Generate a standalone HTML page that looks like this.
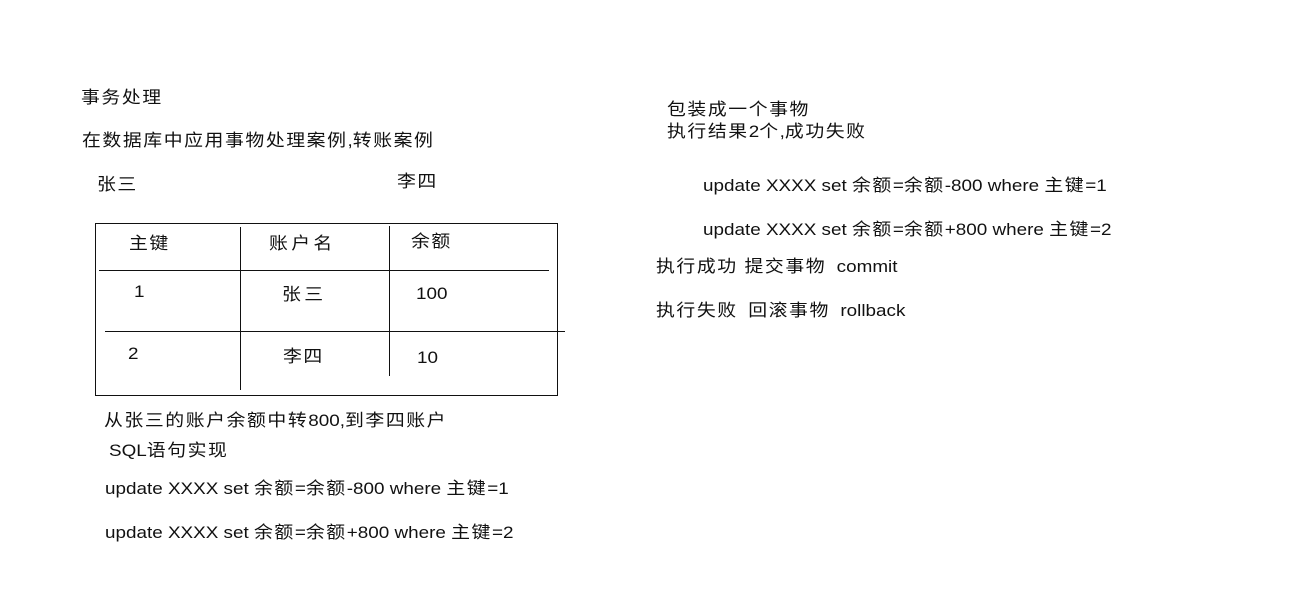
<!DOCTYPE html>
<html><head><meta charset="utf-8"><style>
body{margin:0;width:1290px;height:599px;background:#fff;position:relative;overflow:hidden;font-family:"Liberation Sans","Noto Sans CJK SC",sans-serif;font-size:17px;color:#111}
.t{position:absolute;white-space:nowrap;line-height:20px;transform:scaleX(1.11);transform-origin:0 0}
.c{font-weight:normal;letter-spacing:1.4px}
.l{position:absolute;background:#111}
</style></head><body>
<div class="t" style="left:81px;top:88px"><b class="c">事务处理</b></div>
<div class="t" style="left:82px;top:131px"><b class="c">在数据库中应用事物处理案例</b>,<b class="c">转账案例</b></div>
<div class="t" style="left:97px;top:175px"><b class="c">张三</b></div>
<div class="t" style="left:397px;top:172px"><b class="c">李四</b></div>
<div class="l" style="left:95px;top:223px;width:463px;height:1px"></div>
<div class="l" style="left:95px;top:395px;width:463px;height:1px"></div>
<div class="l" style="left:95px;top:223px;width:1px;height:173px"></div>
<div class="l" style="left:557px;top:223px;width:1px;height:173px"></div>
<div class="l" style="left:99px;top:270px;width:450px;height:1px"></div>
<div class="l" style="left:105px;top:331px;width:460px;height:1px"></div>
<div class="l" style="left:240px;top:227px;width:1px;height:163px"></div>
<div class="l" style="left:389px;top:226px;width:1px;height:150px"></div>
<div class="t" style="left:129px;top:234px"><b class="c">主键</b></div>
<div class="t" style="left:269px;top:234px"><b class="c" style="letter-spacing:3px">账户名</b></div>
<div class="t" style="left:411px;top:232px"><b class="c">余额</b></div>
<div class="t" style="left:134px;top:282px">1</div>
<div class="t" style="left:282px;top:285px"><b class="c" style="letter-spacing:3px">张三</b></div>
<div class="t" style="left:416px;top:284px">100</div>
<div class="t" style="left:128px;top:344px">2</div>
<div class="t" style="left:283px;top:347px"><b class="c">李四</b></div>
<div class="t" style="left:417px;top:348px">10</div>
<div class="t" style="left:104px;top:411px"><b class="c">从张三的账户余额中转</b>800,<b class="c">到李四账户</b></div>
<div class="t" style="left:109px;top:441px">SQL<b class="c">语句实现</b></div>
<div class="t" style="left:105px;top:479px">update XXXX set <b class="c">余额</b>=<b class="c">余额</b>-800 where <b class="c">主键</b>=1</div>
<div class="t" style="left:105px;top:523px">update XXXX set <b class="c">余额</b>=<b class="c">余额</b>+800 where <b class="c">主键</b>=2</div>
<div class="t" style="left:667px;top:100px"><b class="c">包装成一个事物</b></div>
<div class="t" style="left:667px;top:122px"><b class="c">执行结果</b>2<b class="c">个</b>,<b class="c">成功失败</b></div>
<div class="t" style="left:703px;top:176px">update XXXX set <b class="c">余额</b>=<b class="c">余额</b>-800 where <b class="c">主键</b>=1</div>
<div class="t" style="left:703px;top:220px">update XXXX set <b class="c">余额</b>=<b class="c">余额</b>+800 where <b class="c">主键</b>=2</div>
<div class="t" style="left:656px;top:257px"><b class="c">执行成功 提交事物</b> &nbsp;commit</div>
<div class="t" style="left:656px;top:301px"><b class="c">执行失败</b> &nbsp;<b class="c">回滚事物</b> &nbsp;rollback</div>
</body></html>
